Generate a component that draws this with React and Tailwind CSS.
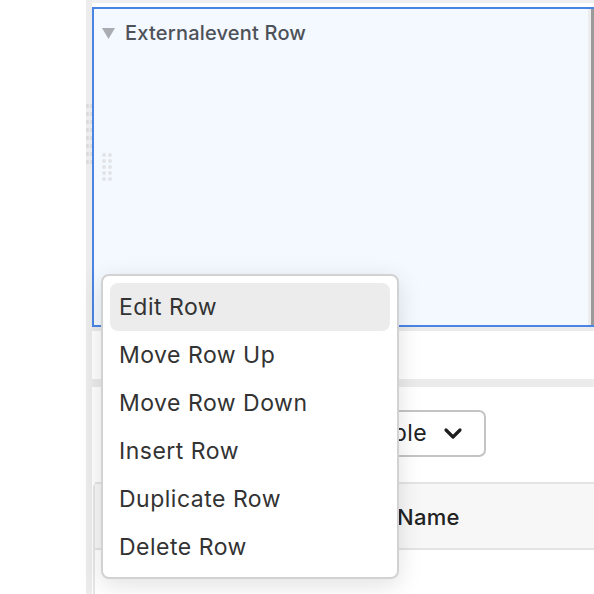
import React from 'react';

const menuItems = ['Edit Row', 'Move Row Up', 'Move Row Down', 'Insert Row', 'Duplicate Row', 'Delete Row'];

function Dots({ rows, gap, size, color }) {
  return (
    <div className={`flex flex-col ${gap}`}>
      {Array.from({ length: rows }).map((_, i) => (
        <div key={i} className="flex gap-[2px]">
          <div className={`${size} rounded-full ${color}`}></div>
          <div className={`${size} rounded-full ${color}`}></div>
        </div>
      ))}
    </div>
  );
}

export default function App() {
  return (
    <div className="relative w-[594px] h-[594px] overflow-hidden bg-white flex font-['Inter',sans-serif]">
      {/* left white gutter */}
      <div className="w-[86px] shrink-0 bg-white"></div>

      {/* gray drag strip */}
      <div className="w-[6px] shrink-0 bg-[#ececec] pt-[104px]">
        <div className="flex flex-col gap-[4px]">
          {Array.from({ length: 8 }).map((_, i) => (
            <div key={i} className="flex gap-[1px]">
              <div className="w-[3px] h-[4px] bg-[#dcdcdc]"></div>
              <div className="w-[2px] h-[4px] bg-[#dcdcdc]"></div>
            </div>
          ))}
        </div>
      </div>

      {/* main column */}
      <div className="flex-1 flex flex-col">
        <div className="h-[3px] bg-[#f0f0f0]"></div>
        <div className="h-[4px] bg-white"></div>

        {/* selected row */}
        <div className="h-[320px] flex border-t-2 border-b-2 border-l-2 border-[#4a84e4] bg-[#f4f8ff]">
          <div className="flex-1 flex flex-col pl-[8px] pt-[13px]">
            <div className="flex items-center gap-[10px]">
              <svg width="13" height="11" viewBox="0 0 13 11">
                <path d="M0 0h13L6.5 11z" fill="#a9acb0" />
              </svg>
              <span className="text-[20px] leading-[22px] font-medium tracking-[0.2px] text-[#4d5258]">Externalevent Row</span>
            </div>
            <div className="mt-[109px]">
              <Dots rows={5} gap="gap-[2px]" size="w-[4px] h-[4px]" color="bg-[#e2e4e8]" />
            </div>
          </div>
          <div className="w-[3px] bg-[#ececec]"></div>
          <div className="w-[3px] bg-[#9a9a9a]"></div>
        </div>

        <div className="h-[4px] bg-[#ebebeb]"></div>
        <div className="h-[48px] bg-white"></div>
        <div className="h-[8px] bg-[#ebebeb]"></div>

        {/* toolbar */}
        <div className="h-[95px] bg-white pt-[23px] pl-[230px]">
          <div className="h-[47px] w-[164px] border-2 border-[#c4c4c4] rounded-[7px] flex items-center justify-end gap-[16px] pr-[21px]">
            <span className="text-[23px] tracking-[0.4px] text-[#222]">Table</span>
            <svg width="20" height="14" viewBox="0 0 20 14" fill="none">
              <path d="M3 3l7 7 7-7" stroke="#1f1f1f" strokeWidth="3.2" strokeLinecap="round" strokeLinejoin="round" />
            </svg>
          </div>
        </div>

        {/* table */}
        <div className="flex-1 ml-[1px] border-l-2 border-[#e6e6e6] rounded-tl-[6px]">
          <div className="h-[68px] bg-[#f7f7f7] border-t-2 border-b-2 border-[#e4e4e4] flex items-center pl-[302px] pt-[3px]">
            <span className="text-[22px] font-medium tracking-[0.3px] text-[#222]">Name</span>
          </div>
        </div>
      </div>

      {/* context menu */}
      <div className="absolute left-[101px] top-[274px] w-[298px] h-[305px] bg-white border-2 border-[#d2d2d2] rounded-[8px] shadow-[0_6px_24px_rgba(0,0,0,0.12)] p-[7px]">
        {menuItems.map((item, i) => (
          <div
            key={item}
            className={`h-[48px] flex items-center pl-[9px] rounded-[8px] text-[23px] tracking-[0.5px] text-[#333] ${i === 0 ? 'bg-[#ebeceb]' : ''}`}
          >
            {item}
          </div>
        ))}
      </div>
    </div>
  );
}
